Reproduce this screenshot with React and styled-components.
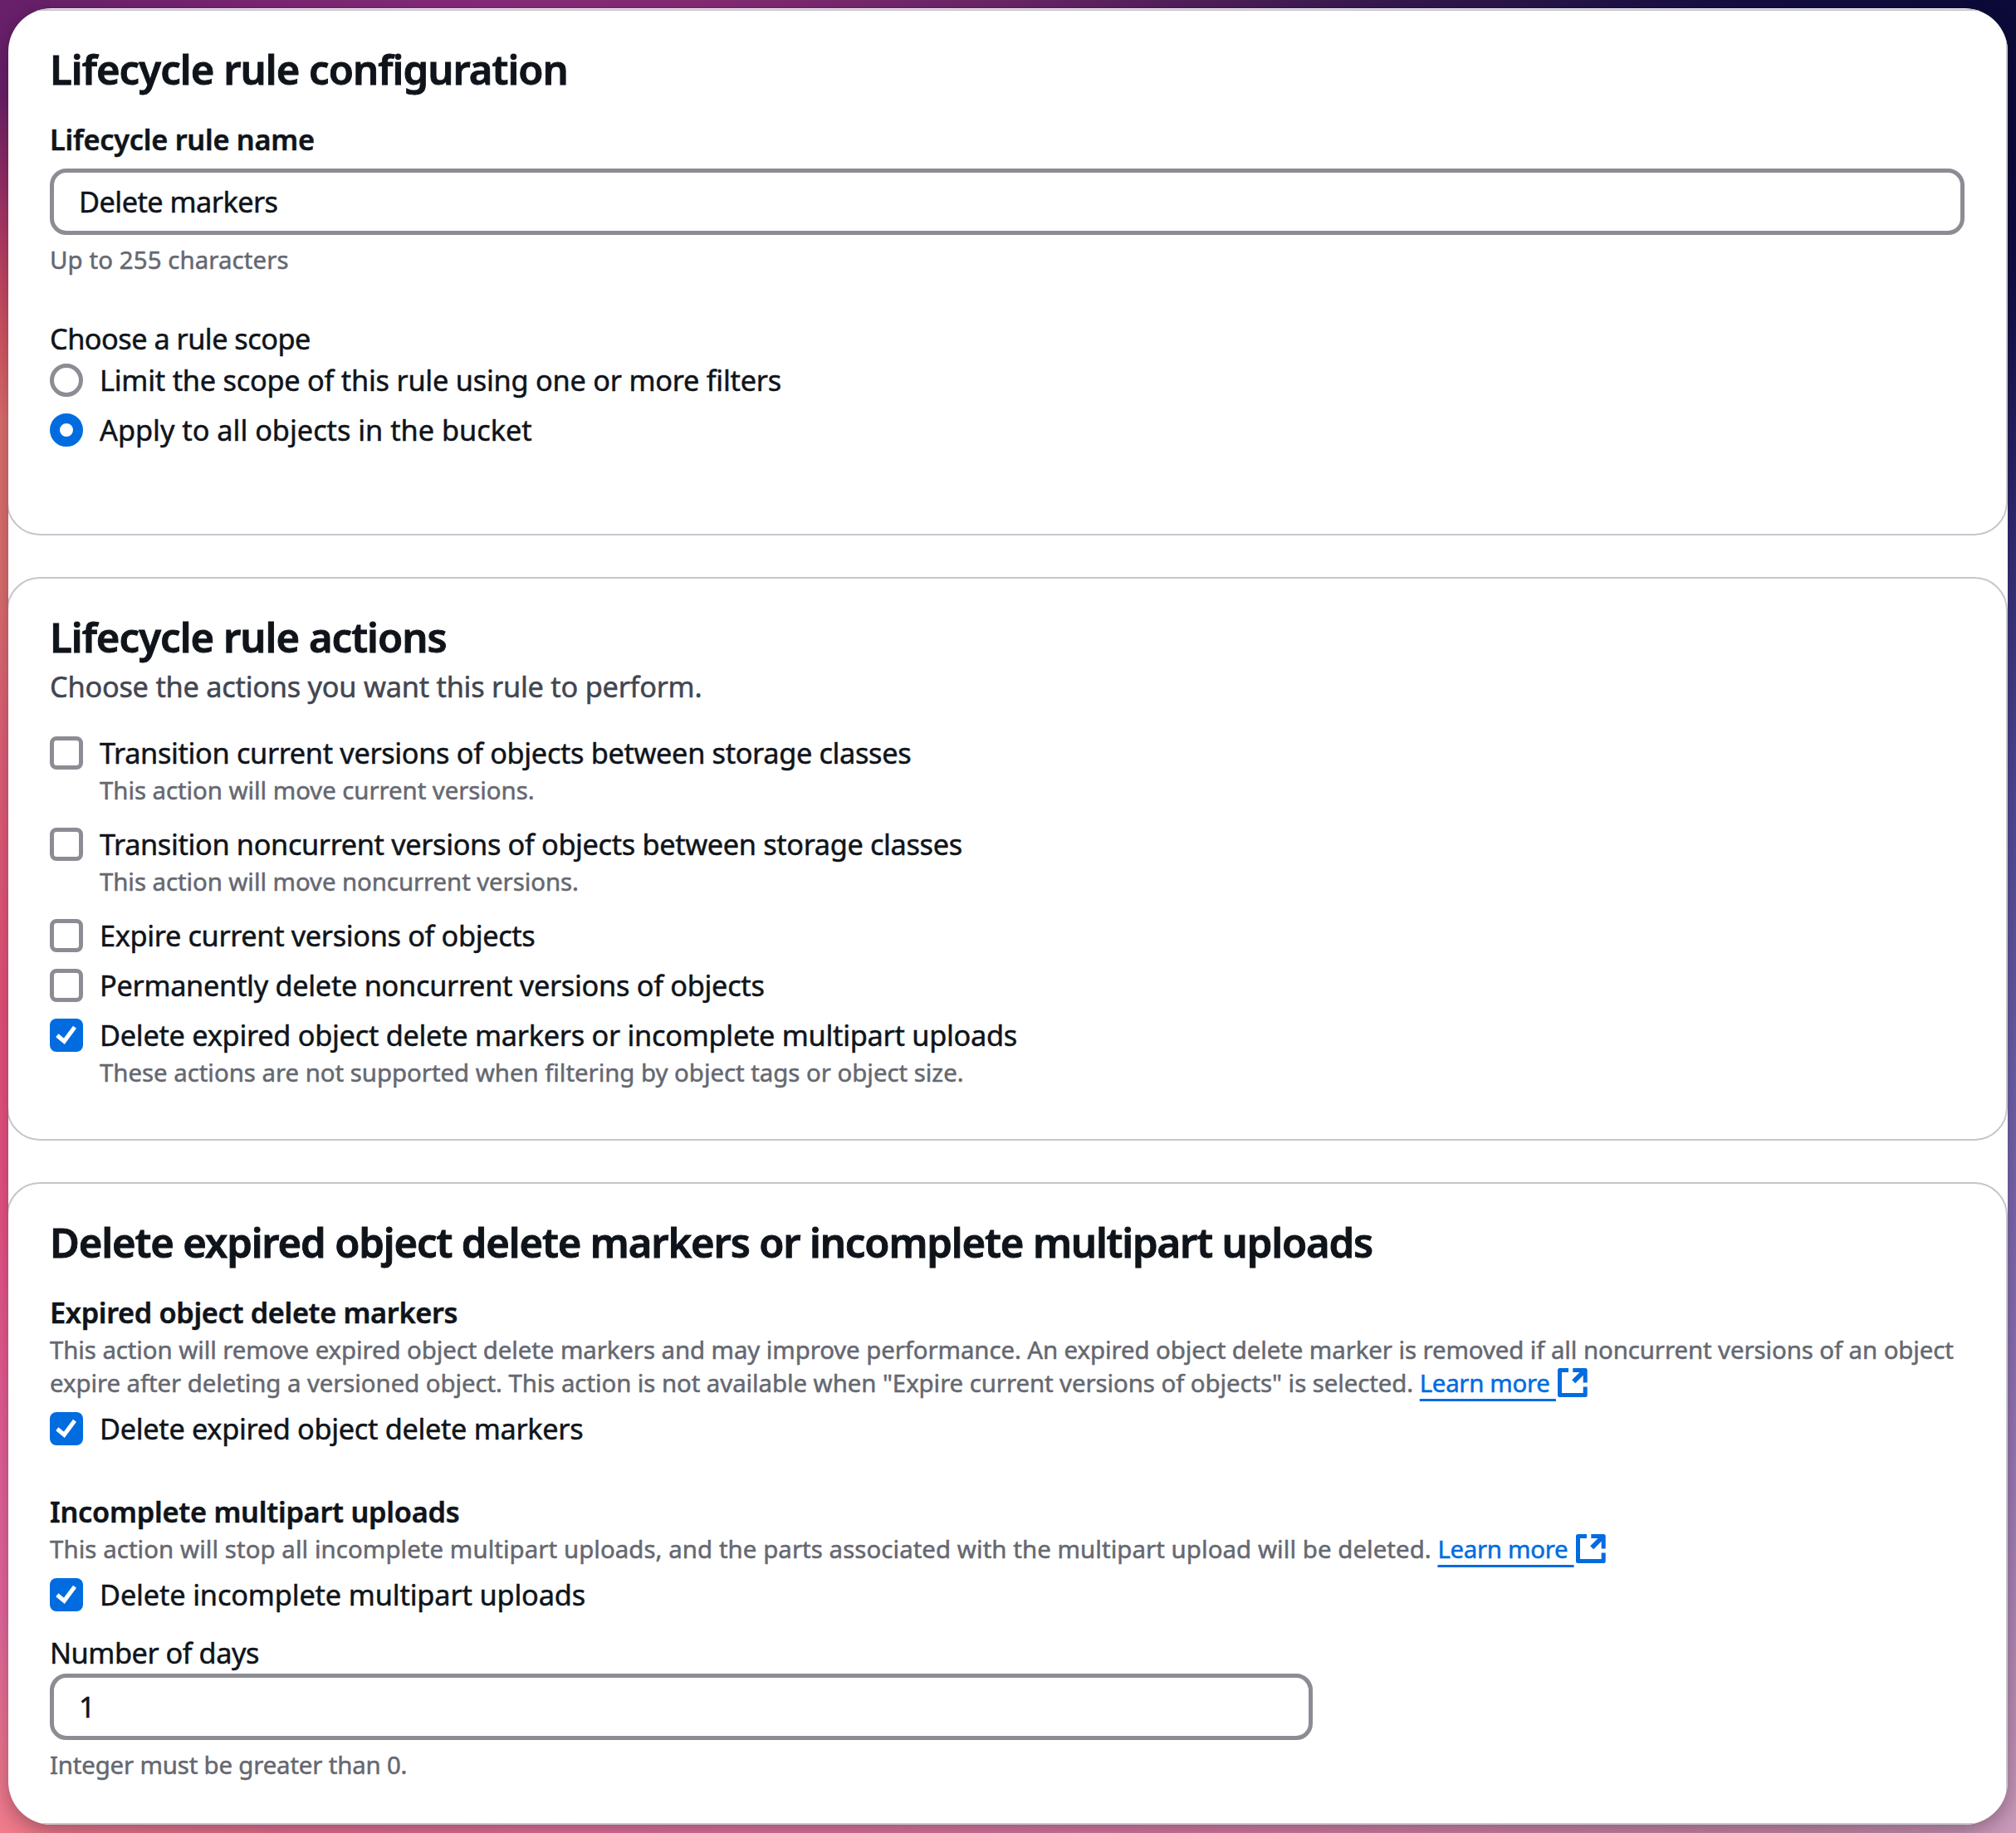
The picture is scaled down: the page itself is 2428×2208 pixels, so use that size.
import React from 'react';
import styled, { createGlobalStyle, css } from 'styled-components';

const color = {
  text: '#0f141a',
  secondary: '#424650',
  muted: '#656871',
  control: '#8c8c94',
  divider: '#c6c6cd',
  accent: '#006ce0',
};

const GlobalStyle = createGlobalStyle`
  *, *::before, *::after { box-sizing: border-box; }
  body {
    margin: 0;
    color: ${color.text};
    font-family: "Noto Sans", "Open Sans", sans-serif;
  }
`;

const Desktop = styled.div`
  display: flex;
  width: 2428px;
  height: 2208px;
  padding: 10px;
  overflow: hidden;
  background-color: #7a2a72;
  background-image:
    linear-gradient(180deg, #67206a 0%, #6b2068 5%, #8a2a68 8.5%, #b63c66 13%, #d45563 18%, #e27070 23%, #e07070 32%, #e4607a 42%, #e8527c 55%, #ea5486 66%, #e8629a 80%, #e868a0 88%, #ee7494 94%, #f07c8a 100%),
    linear-gradient(180deg, #0b0a38 0%, #0d0b3e 12%, #16134e 18%, #302c74 29%, #504a98 44%, #6c60aa 58%, #8a70b4 73%, #aa84b6 86%, #be90b6 94%, #ca9aba 100%),
    linear-gradient(90deg, #67206a 0%, #7a2672 12%, #872c7a 24%, #872c76 34%, #6b2668 50%, #38194f 68%, #150f42 86%, #0b0a38 100%),
    linear-gradient(90deg, #f07c8a 0%, #ea7292 15%, #e8749e 30%, #dc7ea8 60%, #ca8cac 90%, #ca9aba 100%);
  background-size: 60px 100%, 60px 100%, 100% 60px, 100% 60px;
  background-position: left top, right top, left top, left bottom;
  background-repeat: no-repeat;
`;

const Window = styled.main`
  display: flex;
  flex-direction: column;
  gap: 50px;
  width: 2408px;
  height: 2188px;
  padding-top: 1px;
  background: #fff;
  border-radius: 52px;
  overflow: hidden;
  box-shadow: 0 8px 24px rgba(20, 10, 20, 0.34);
`;

const Section = styled.section`
  flex: none;
  width: 2410px;
  margin-left: -2px;
  padding: 40px 50px ${(p) => p.$bottom}px;
  border: 2px solid ${color.divider};
  border-radius: 40px;
`;

const track = css`
  letter-spacing: ${(p) => p.$track || 0}px;
  white-space: nowrap;
`;

const Title = styled.h2`
  ${track}
  margin: 0 0 ${(p) => (p.$tight ? 5 : 30)}px;
  font-size: 49px;
  line-height: 60px;
  font-weight: 600;
  -webkit-text-stroke: 0.9px;
`;

const Subtitle = styled.p`
  ${track}
  margin: 0 0 30px;
  color: ${color.secondary};
  font-size: 34.3px;
  line-height: 50px;
  -webkit-text-stroke: 0.5px;
`;

const Label = styled.div`
  ${track}
  font-size: 34.3px;
  line-height: 50px;
  font-weight: ${(p) => (p.$strong ? 600 : 400)};
  -webkit-text-stroke: 0.5px;
`;

const Hint = styled.div`
  color: ${color.muted};
  font-size: 29.4px;
  line-height: 40px;
  -webkit-text-stroke: 0.5px;
`;

const Line = styled.div`
  ${track}
`;

const Field = styled.div`
  display: flex;
  flex-direction: column;
  gap: 10px;
`;

const Input = styled.input`
  ${track}
  width: ${(p) => p.$width};
  height: 80px;
  padding: 0 30px 2px;
  border: 5px solid ${color.control};
  border-radius: 20px;
  background: #fff;
  color: ${color.text};
  font-family: inherit;
  font-size: 34.3px;
  line-height: 50px;
  outline: none;
  -webkit-text-stroke: 0.5px;
`;

const Group = styled.div`
  margin-top: ${(p) => p.$top || 0}px;
`;

const Options = styled.div`
  display: flex;
  flex-direction: column;
  gap: 10px;
  margin-top: ${(p) => p.$top || 0}px;
`;

const Option = styled.label`
  display: grid;
  grid-template-columns: 40px 1fr;
  column-gap: 20px;
  padding-bottom: ${(p) => (p.$spaced ? 10 : 0)}px;
`;

const Box = styled.span`
  display: flex;
  width: 40px;
  height: 40px;
  margin-top: 5px;
  border: ${(p) => (p.$checked ? 0 : 5)}px solid ${color.control};
  border-radius: 8px;
  background: ${(p) => (p.$checked ? color.accent : '#fff')};
`;

const Radio = styled.span`
  width: 40px;
  height: 40px;
  margin-top: 5px;
  border: ${(p) => (p.$checked ? `12px solid ${color.accent}` : `5px solid ${color.control}`)};
  border-radius: 50%;
  background: #fff;
`;

const Link = styled.a`
  color: ${color.accent};
  letter-spacing: -0.3px;
  text-decoration: underline;
  text-decoration-thickness: 3px;
  text-underline-offset: 8px;
  text-decoration-skip-ink: none;
`;

const IconSlot = styled.svg`
  width: 36px;
  height: 35px;
  margin-left: 2.5px;
  vertical-align: -6px;
  overflow: visible;
`;

function ExternalIcon() {
  return (
    <IconSlot viewBox="0 0 36 35" fill="none" stroke={color.accent} strokeWidth="5" strokeLinejoin="round">
      <path d="M13 2.5H2.5V32.5H33.2V22.4" />
      <path d="M18.3 2.5H33.2V17.4" />
      <path d="M19.2 16.3L33 2.5" strokeWidth="5.6" />
    </IconSlot>
  );
}

function Checkbox({ checked, label, labelTrack, hint, hintTrack, spaced }) {
  return (
    <Option $spaced={spaced}>
      <Box $checked={checked}>
        {checked && (
          <svg width="40" height="40" viewBox="0 0 40 40" fill="none" stroke="#fff" strokeWidth="5">
            <path d="M8.8 20.3L17.3 27.3L30 10.2" />
          </svg>
        )}
      </Box>
      <div>
        <Label $track={labelTrack}>{label}</Label>
        {hint && (
          <Hint>
            <Line $track={hintTrack}>{hint}</Line>
          </Hint>
        )}
      </div>
    </Option>
  );
}

function RadioOption({ checked, label, labelTrack }) {
  return (
    <Option>
      <Radio $checked={checked} />
      <Label $track={labelTrack}>{label}</Label>
    </Option>
  );
}

function LearnMore() {
  return (
    <>
      <Link>Learn more&nbsp;</Link>
      <ExternalIcon />
    </>
  );
}

export default function App() {
  return (
    <>
      <GlobalStyle />
      <Desktop>
        <Window>
          <Section $bottom={100}>
            <Title $track={-0.965}>Lifecycle rule configuration</Title>
            <Field>
              <Label $strong $track={-0.248}>Lifecycle rule name</Label>
              <Input $width="100%" $track={-0.53} defaultValue="Delete markers" />
              <Hint>
                <Line $track={0.098}>Up to 255 characters</Line>
              </Hint>
            </Field>
            <Group $top={50}>
              <Label $track={-0.523}>Choose a rule scope</Label>
              <Options>
                <RadioOption label="Limit the scope of this rule using one or more filters" labelTrack={-0.235} />
                <RadioOption checked label="Apply to all objects in the bucket" labelTrack={-0.01} />
              </Options>
            </Group>
          </Section>

          <Section $bottom={60}>
            <Title $tight $track={-0.98}>Lifecycle rule actions</Title>
            <Subtitle $track={-0.238}>Choose the actions you want this rule to perform.</Subtitle>
            <Options>
              <Checkbox
                spaced
                label="Transition current versions of objects between storage classes"
                labelTrack={-0.34}
                hint="This action will move current versions."
                hintTrack={-0.055}
              />
              <Checkbox
                spaced
                label="Transition noncurrent versions of objects between storage classes"
                labelTrack={-0.35}
                hint="This action will move noncurrent versions."
                hintTrack={-0.07}
              />
              <Checkbox label="Expire current versions of objects" labelTrack={-0.35} />
              <Checkbox label="Permanently delete noncurrent versions of objects" labelTrack={-0.29} />
              <Checkbox
                checked
                label="Delete expired object delete markers or incomplete multipart uploads"
                labelTrack={-0.27}
                hint="These actions are not supported when filtering by object tags or object size."
                hintTrack={-0.025}
              />
            </Options>
          </Section>

          <Section $bottom={50}>
            <Title $track={-1.151}>Delete expired object delete markers or incomplete multipart uploads</Title>
            <Group>
              <Label $strong $track={-0.333}>Expired object delete markers</Label>
              <Hint>
                <Line $track={-0.082}>
                  This action will remove expired object delete markers and may improve performance. An expired object
                  delete marker is removed if all noncurrent versions of an object
                </Line>
                <Line $track={-0.068}>
                  expire after deleting a versioned object. This action is not available when "Expire current versions
                  of objects" is selected. <LearnMore />
                </Line>
              </Hint>
              <Options $top={10}>
                <Checkbox checked label="Delete expired object delete markers" labelTrack={-0.315} />
              </Options>
            </Group>
            <Group $top={50}>
              <Label $strong $track={-0.236}>Incomplete multipart uploads</Label>
              <Hint>
                <Line $track={0.068}>
                  This action will stop all incomplete multipart uploads, and the parts associated with the multipart
                  upload will be deleted. <LearnMore />
                </Line>
              </Hint>
              <Options $top={10}>
                <Checkbox checked label="Delete incomplete multipart uploads" labelTrack={-0.15} />
              </Options>
            </Group>
            <Group $top={20}>
              <Label $track={-0.472}>Number of days</Label>
              <Field>
                <Input $width="1521px" defaultValue="1" />
                <Hint>
                  <Line $track={-0.165}>Integer must be greater than 0.</Line>
                </Hint>
              </Field>
            </Group>
          </Section>
        </Window>
      </Desktop>
    </>
  );
}
